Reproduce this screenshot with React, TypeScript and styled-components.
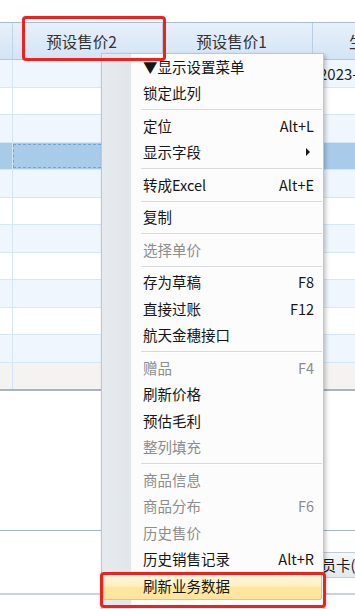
import styled, { createGlobalStyle } from "styled-components";

const GlobalStyle = createGlobalStyle`
  html, body {
    margin: 0;
    padding: 0;
    background: #ffffff;
  }
  body {
    font-family: "Noto Sans CJK SC", "Noto Sans", sans-serif;
  }
`;

type Item = {
  label: string;
  key?: string;
  sub?: boolean;
  off?: boolean;
  hot?: boolean;
  sep?: boolean;
};

const items: Item[] = [
  { label: "▼显示设置菜单" },
  { label: "锁定此列", sep: true },
  { label: "定位", key: "Alt+L" },
  { label: "显示字段", sub: true, sep: true },
  { label: "转成Excel", key: "Alt+E", sep: true },
  { label: "复制", sep: true },
  { label: "选择单价", off: true, sep: true },
  { label: "存为草稿", key: "F8" },
  { label: "直接过账", key: "F12" },
  { label: "航天金穗接口", sep: true },
  { label: "赠品", key: "F4", off: true },
  { label: "刷新价格" },
  { label: "预估毛利" },
  { label: "整列填充", off: true, sep: true },
  { label: "商品信息", off: true },
  { label: "商品分布", key: "F6", off: true },
  { label: "历史售价", off: true },
  { label: "历史销售记录", key: "Alt+R" },
  { label: "刷新业务数据", hot: true },
];

const rowCount = 11;

const App = () => {
  return (
    <Page>
      <GlobalStyle />
      <TopGap />
      <Grid>
        <HeadRow>
          <HeadCell />
          <HeadCell>预设售价2</HeadCell>
          <HeadCell>预设售价1</HeadCell>
          <HeadCell>生产日期</HeadCell>
        </HeadRow>
        {Array.from({ length: rowCount }).map((_, i) => (
          <Row key={i} $alt={i % 2 === 0} $selected={i === 3}>
            <Cell />
            <Cell>{i === 3 && <FocusBox />}</Cell>
            <Cell />
            <Cell>{i === 0 ? "2023-06-18" : ""}</Cell>
          </Row>
        ))}
        <SumRow>
          <Cell />
          <Cell />
          <Cell />
          <Cell />
        </SumRow>
      </Grid>
      <BottomPanel />
      <Toolbar>
        <ToolButton>会员卡(F9)</ToolButton>
      </Toolbar>
      <StatusBar />

      <Menu>
        {items.map((it) => (
          <MenuGroup key={it.label}>
            <MenuItem $off={it.off} $hot={it.hot}>
              <span>{it.label}</span>
              {it.key && <Shortcut>{it.key}</Shortcut>}
              {it.sub && <SubArrow />}
            </MenuItem>
            {it.sep && <Separator />}
          </MenuGroup>
        ))}
      </Menu>

      <Mark $left={22} $top={16} $w={144} $h={45} />
      <Mark $left={100} $top={572} $w={226} $h={36} />
    </Page>
  );
};

export default App;

const Page = styled.div`
  position: relative;
  width: 355px;
  height: 609px;
  overflow: hidden;
  background: #ffffff;
  display: flex;
  flex-direction: column;
`;

const TopGap = styled.div`
  height: 22px;
  flex-shrink: 0;
`;

const Grid = styled.div`
  width: 460px;
  flex-shrink: 0;
`;

const cols = "13px 150px 150px 147px";

const HeadRow = styled.div`
  display: grid;
  grid-template-columns: ${cols};
  height: 36px;
  border-top: 1px solid #a9bdd2;
  border-bottom: 1px solid #b3c9e0;
  background: linear-gradient(#e7f0fa, #d4e4f5);
`;

const HeadCell = styled.div`
  display: flex;
  align-items: center;
  justify-content: center;
  padding-right: 12px;
  border-right: 1px solid #b8cde3;
  color: #333333;
  font-size: 15.5px;
  white-space: nowrap;
  overflow: hidden;
  &:first-child {
    padding-right: 0;
    border-right-color: #c2d4e8;
  }
`;

const Row = styled.div<{ $alt?: boolean; $selected?: boolean }>`
  display: grid;
  grid-template-columns: ${cols};
  height: 27.5px;
  box-sizing: border-box;
  border-bottom: 1px solid #d7e7f8;
  background: ${(p) => (p.$selected ? "#a9cbea" : p.$alt ? "#eff6fe" : "#ffffff")};
`;

const Cell = styled.div`
  position: relative;
  border-right: 1px solid #d4e5f7;
  padding-left: 6px;
  display: flex;
  align-items: center;
  font-size: 15px;
  color: #222222;
  white-space: nowrap;
  overflow: hidden;
`;

const FocusBox = styled.div`
  position: absolute;
  inset: 1px 1px 1px 0;
  border: 1px dashed #6fa6d6;
`;

const SumRow = styled(Row)`
  height: 28px;
  background: #f4f3f2;
  border-bottom: 2px solid #a8b4c0;
`;

const BottomPanel = styled.div`
  height: 139px;
  flex-shrink: 0;
`;

const Toolbar = styled.div`
  height: 63px;
  flex-shrink: 0;
  border-top: 1px solid #a3b7ca;
  display: flex;
  align-items: center;
  padding-left: 298px;
  padding-top: 6px;
  box-sizing: border-box;
`;

const ToolButton = styled.div`
  flex-shrink: 0;
  height: 24px;
  padding: 0 8px;
  display: flex;
  align-items: center;
  font-size: 14.5px;
  color: #1a1a1a;
  white-space: nowrap;
  background: linear-gradient(#f6f8fa, #e3e8ee);
  border: 1px solid #c3ccd6;
  border-radius: 2px;
`;

const StatusBar = styled.div`
  flex: 1;
  border-top: 2px solid #ccd2d8;
`;

const Menu = styled.div`
  position: absolute;
  left: 101px;
  top: 53px;
  width: 223px;
  height: 570px;
  box-sizing: border-box;
  padding: 0;
  border: 1px solid #c6c6c6;
  background: linear-gradient(
    to right,
    #e6eaee 0,
    #e1e6eb 29px,
    #f6f7f8 29px,
    #fcfcfc 31px,
    #fcfcfc 100%
  );
  box-shadow: 2px 2px 4px rgba(0, 0, 0, 0.22);
`;

const MenuGroup = styled.div``;

const MenuItem = styled.div<{ $off?: boolean; $hot?: boolean }>`
  position: relative;
  height: 26.5px;
  box-sizing: border-box;
  display: flex;
  align-items: center;
  justify-content: space-between;
  padding: 0 7px 2px 39px;
  margin: 0 1px;
  font-size: 14.5px;
  color: ${(p) => (p.$off ? "#8d8d8d" : "#161616")};
  white-space: nowrap;
  border: 1px solid ${(p) => (p.$hot ? "#e4c47a" : "transparent")};
  border-radius: 2px;
  background: ${(p) =>
    p.$hot ? "linear-gradient(#fff8e0 0%, #fff1c4 45%, #ffe69e 55%, #ffe59c 100%)" : "transparent"};
`;

const Shortcut = styled.span`
  font-size: 14.5px;
`;

const SubArrow = styled.span`
  width: 0;
  height: 0;
  margin-right: 4px;
  border-top: 4px solid transparent;
  border-bottom: 4px solid transparent;
  border-left: 4px solid #1a1a1a;
`;

const Separator = styled.div`
  height: 1px;
  margin: 2px 1px 2px 39px;
  background: #d9dadb;
  border-bottom: 1px solid #ffffff;
`;

const Mark = styled.div<{ $left: number; $top: number; $w: number; $h: number }>`
  position: absolute;
  left: ${(p) => p.$left}px;
  top: ${(p) => p.$top}px;
  width: ${(p) => p.$w}px;
  height: ${(p) => p.$h}px;
  box-sizing: border-box;
  border: 3px solid #f2201c;
  border-radius: 4px;
  pointer-events: none;
`;
